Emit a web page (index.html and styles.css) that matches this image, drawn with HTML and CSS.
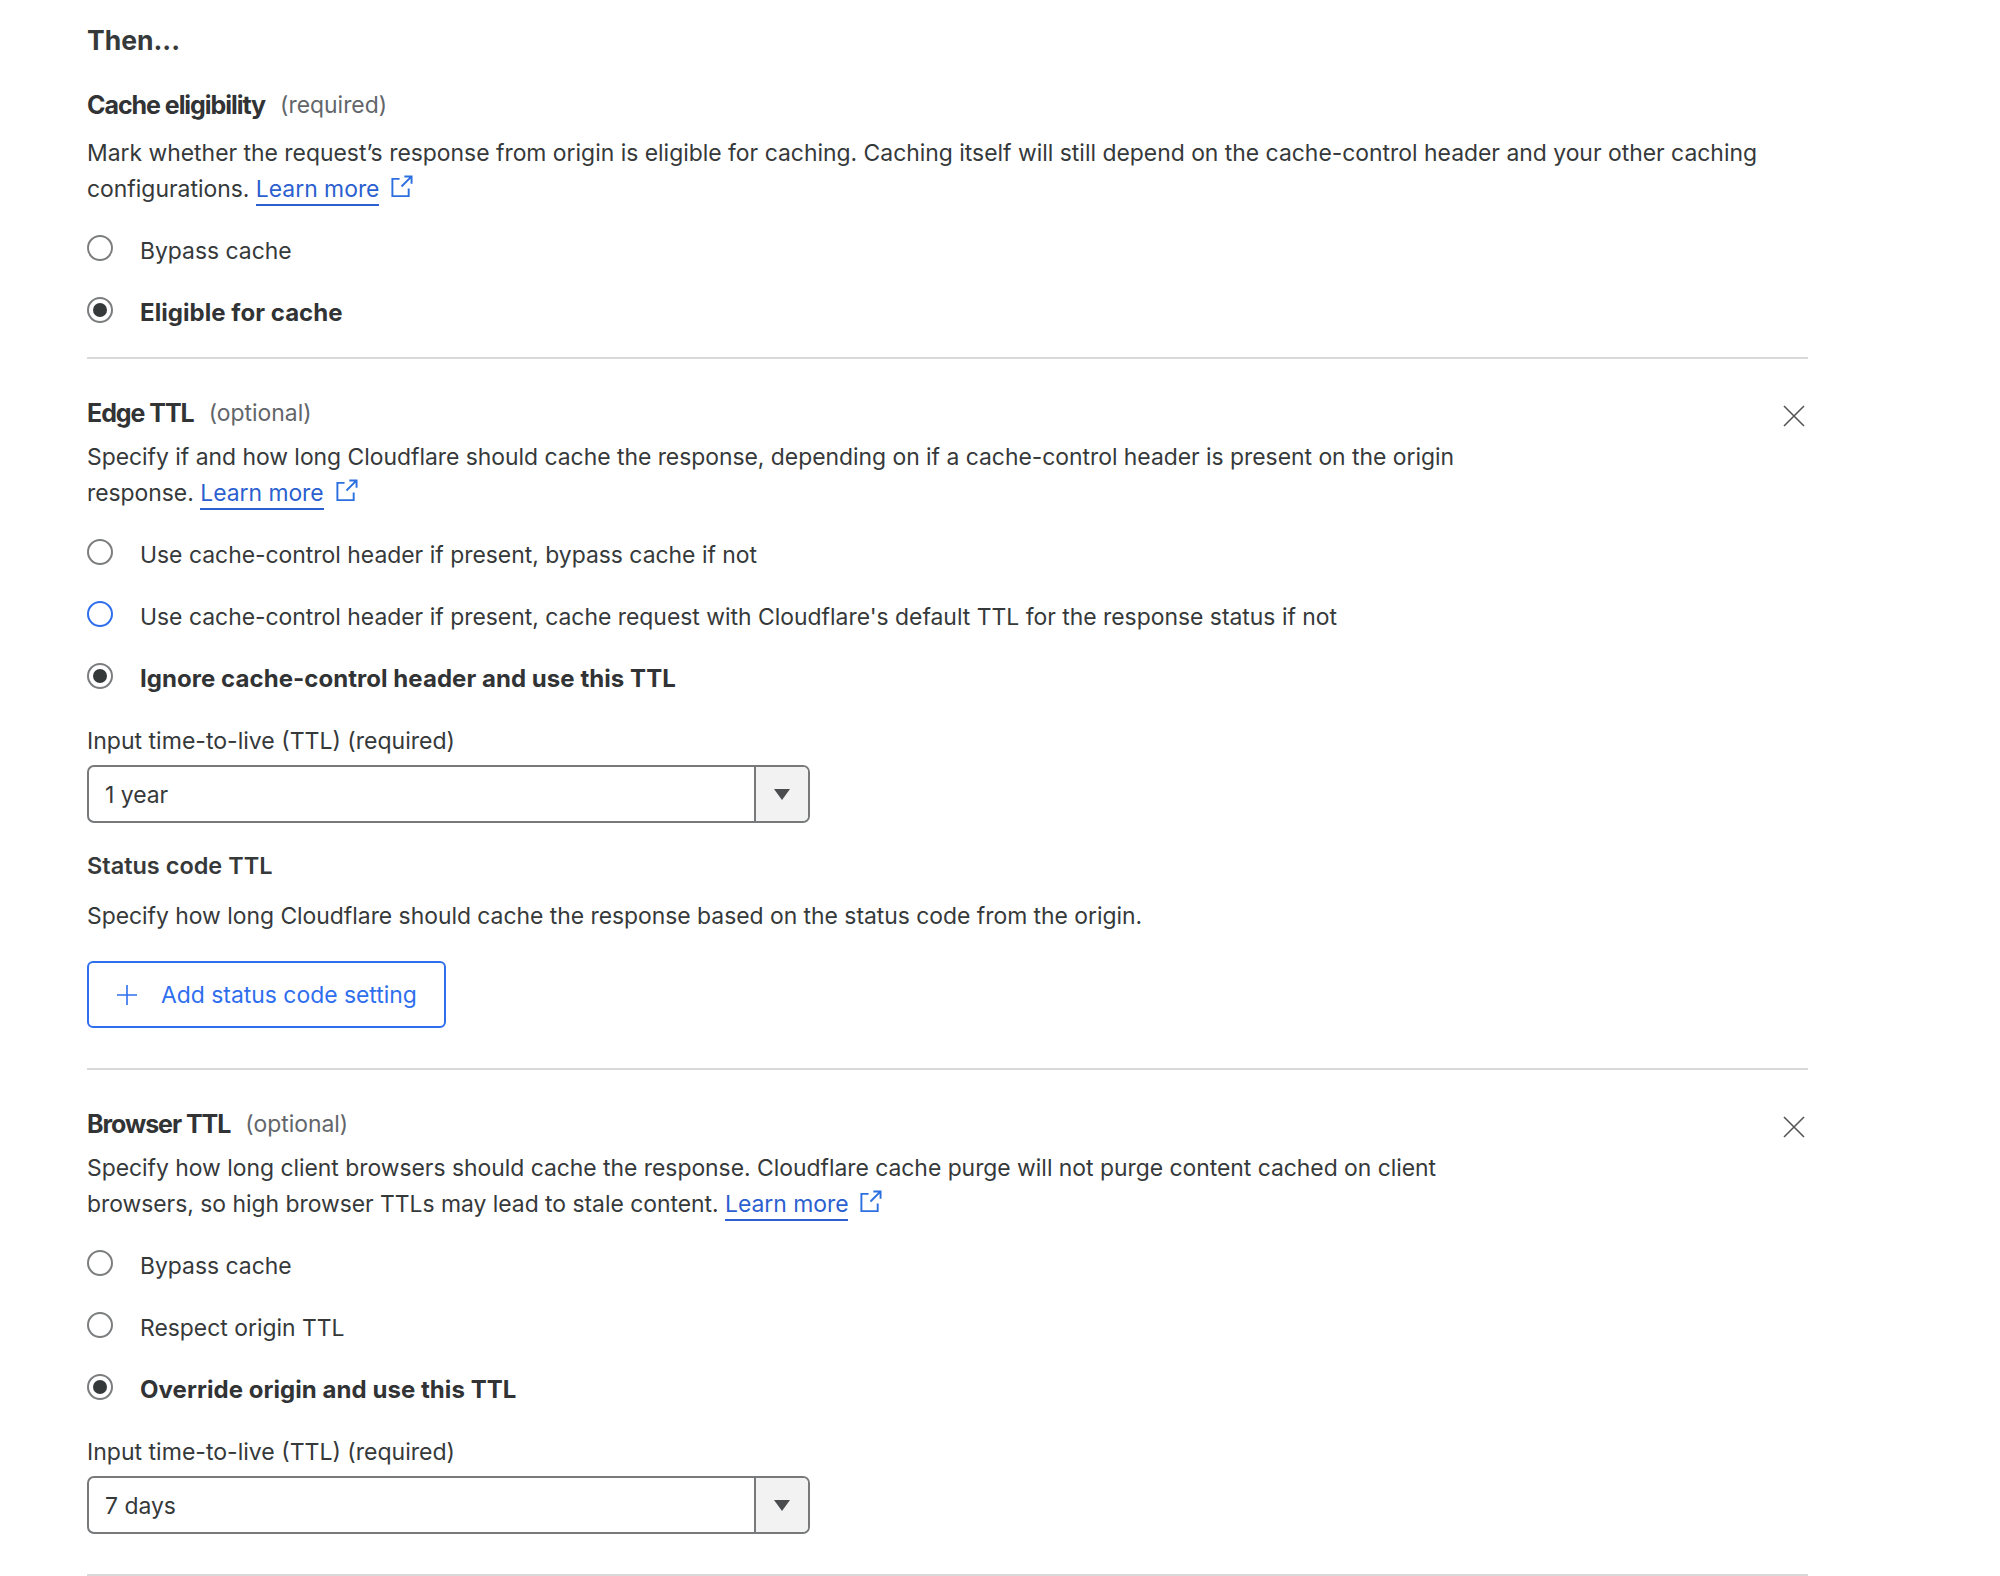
FILE: index.html
```html
<!DOCTYPE html>
<html lang="en">
<head>
<meta charset="utf-8">
<title>Then...</title>
<link rel="stylesheet" href="styles.css">
</head>
<body>
<main class="page">
  <h2 class="then">Then...</h2>

  <section class="group first">
    <div class="head"><h3 class="title">Cache eligibility</h3><span class="note">(required)</span></div>
    <p class="desc wide">Mark whether the request’s response from origin is eligible for caching. Caching itself will still depend on the cache-control header and your other caching configurations. <a class="link" href="#">Learn more</a><svg class="ext" viewBox="0 0 24 24"><path d="M10 4H2.5v18h17v-8M12 12 22 2M15 1.5h7.5V9"/></svg></p>
    <div class="radios">
      <label class="radio"><span class="dot"></span>Bypass cache</label>
      <label class="radio on"><span class="dot"></span>Eligible for cache</label>
    </div>
  </section>

  <section class="group">
    <div class="head"><h3 class="title">Edge TTL</h3><span class="note">(optional)</span>
      <svg class="close" viewBox="0 0 22 22"><path d="M1 1l20 20M21 1 1 21"/></svg></div>
    <p class="desc">Specify if and how long Cloudflare should cache the response, depending on if a cache-control header is present on the origin response. <a class="link" href="#">Learn more</a><svg class="ext" viewBox="0 0 24 24"><path d="M10 4H2.5v18h17v-8M12 12 22 2M15 1.5h7.5V9"/></svg></p>
    <div class="radios">
      <label class="radio"><span class="dot"></span>Use cache-control header if present, bypass cache if not</label>
      <label class="radio focus"><span class="dot"></span>Use cache-control header if present, cache request with Cloudflare's default TTL for the response status if not</label>
      <label class="radio on"><span class="dot"></span>Ignore cache-control header and use this TTL</label>
    </div>
    <div class="field-label">Input time-to-live (TTL) (required)</div>
    <div class="select"><span class="value">1 year</span><span class="caret"><i class="tri"></i></span></div>
    <h4 class="sub">Status code TTL</h4>
    <p class="desc sub-desc">Specify how long Cloudflare should cache the response based on the status code from the origin.</p>
    <button class="btn" type="button"><svg class="plus" viewBox="0 0 22 22"><path d="M11 1v20M1 11h20"/></svg>Add status code setting</button>
  </section>

  <section class="group">
    <div class="head"><h3 class="title">Browser TTL</h3><span class="note">(optional)</span>
      <svg class="close" viewBox="0 0 22 22"><path d="M1 1l20 20M21 1 1 21"/></svg></div>
    <p class="desc">Specify how long client browsers should cache the response. Cloudflare cache purge will not purge content cached on client browsers, so high browser TTLs may lead to stale content. <a class="link" href="#">Learn more</a><svg class="ext" viewBox="0 0 24 24"><path d="M10 4H2.5v18h17v-8M12 12 22 2M15 1.5h7.5V9"/></svg></p>
    <div class="radios">
      <label class="radio"><span class="dot"></span>Bypass cache</label>
      <label class="radio"><span class="dot"></span>Respect origin TTL</label>
      <label class="radio on"><span class="dot"></span>Override origin and use this TTL</label>
    </div>
    <div class="field-label">Input time-to-live (TTL) (required)</div>
    <div class="select"><span class="value">7 days</span><span class="caret"><i class="tri"></i></span></div>
  </section>
</main>
</body>
</html>
```
FILE: styles.css
```css
* { box-sizing: border-box; }
html, body { margin: 0; padding: 0; background: #fff; }
body {
  font-family: Inter, "Liberation Sans", sans-serif;
  font-size: 22.9px;
  line-height: 36px;
  color: #36393a;
  height: 1576px;
  overflow: hidden;
}
.page { width: 1808px; margin-left: 87px; padding-top: 22px; }
.then { margin: 0; font-size: 26.5px; line-height: 36px; font-weight: 700; color: #36393a; }
.group { border-bottom: 2px solid #d9d9d9; padding: 36px 0 40px; width: 1721px; }
.group.first { padding-top: 29px; padding-bottom: 26px; }
.head { display: flex; align-items: center; height: 36px; }
.title { margin: 0; font-size: 25px; font-weight: 650; letter-spacing: -1.05px; color: #313335; }
.note { margin-left: 15px; color: #62666a; font-size: 22.9px; }
.close { width: 22px; height: 22px; margin-left: auto; margin-top: 5px; margin-right: 3px; fill: none; stroke: #555; stroke-width: 1.6; }
.desc { margin: 8px 0 0; width: 1400px; letter-spacing: -0.02px; }
.desc.wide { width: 1721px; margin-top: 12px; letter-spacing: 0; }
.link { color: #2c5fcf; text-decoration: none; border-bottom: 2px solid #2c5fcf; padding-bottom: 1px; }
.ext { width: 23px; height: 23px; margin-left: 11px; fill: none; stroke: #2c6fe0; stroke-width: 2; vertical-align: -1px; }
.radios { display: flex; flex-direction: column; gap: 26px; margin-top: 26px; }
.radio { display: flex; align-items: center; height: 36px; }
.dot {
  width: 26px; height: 26px; margin-right: 27px; margin-top: -6px;
  border: 2px solid #7b7d7e; border-radius: 50%; flex: none; background: #fff;
  display: flex; align-items: center; justify-content: center;
}
.radio.focus .dot { border: 2px solid #2f6fee; }
.radio.on { font-size: 24px; letter-spacing: 0.05px; font-weight: 700; color: #313335; }
.radio.on .dot::after { content: ""; width: 14px; height: 14px; border-radius: 50%; background: #36393a; }
.field-label { margin-top: 26px; font-size: 23.05px; }
.select {
  display: flex; width: 723px; height: 58px; margin-top: 6px;
  border: 2px solid #77797b; border-radius: 7px; overflow: hidden;
}
.value { flex: 1; padding-left: 16px; line-height: 56px; }
.caret { width: 54px; background: #f2f2f2; border-left: 2px solid #77797b; display: flex; align-items: center; justify-content: center; padding-top: 1px; }
.tri { width: 0; height: 0; border-left: 8.5px solid transparent; border-right: 8.5px solid transparent; border-top: 11px solid #4a4c4e; }
.sub { margin: 25px 0 0; font-size: 23.5px; font-weight: 600; color: #36393a; }
.desc.sub-desc { margin-top: 14px; width: auto; }
.btn {
  display: flex; align-items: center; width: 359px; height: 67px; margin-top: 27px; padding: 0 0 0 27px;
  background: #fff; border: 2px solid #2f6fee; border-radius: 6px; color: #2f6fee;
  font: inherit; cursor: pointer;
}
.plus { width: 22px; height: 22px; margin-right: 23px; fill: none; stroke: #2f6fee; stroke-width: 1.6; }
```
